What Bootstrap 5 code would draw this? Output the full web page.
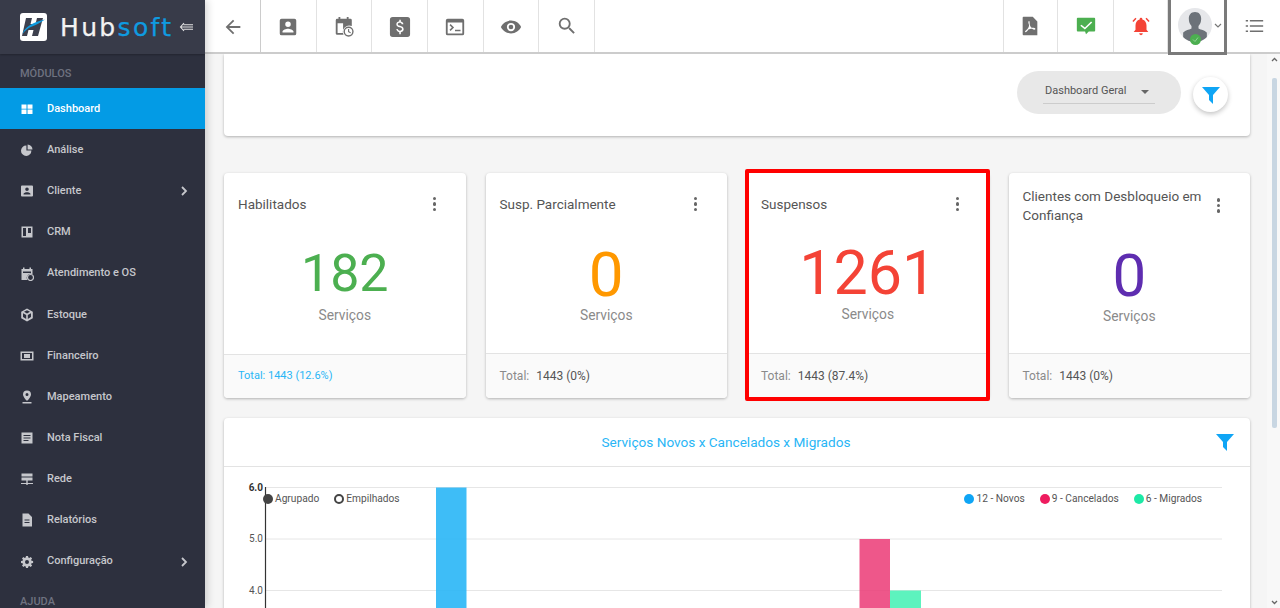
<!DOCTYPE html>
<html lang="pt-BR">
<head>
<meta charset="utf-8">
<title>Hubsoft</title>
<link href="https://cdn.jsdelivr.net/npm/bootstrap@5.3.0/dist/css/bootstrap.min.css" rel="stylesheet">
<style>
html,body{height:608px;overflow:hidden;margin:0}
body{font-family:Roboto,"Liberation Sans",sans-serif;background:#f5f5f5;color:#555}
.app-shell{height:608px;width:1280px}
.side-panel{width:205px;flex:none;background:#2d303e;z-index:3;box-shadow:2px 0 8px rgba(0,0,0,.18);overflow:hidden}
.brand-bar{height:54px;flex:none;background:#383b49;box-shadow:0 1px 2px rgba(0,0,0,.25);padding-left:20px}
.brand-word{font-family:"DejaVu Sans",sans-serif;font-size:25px;line-height:1;margin-left:13px;letter-spacing:2.35px;color:#f2f2f2;font-weight:400;-webkit-text-stroke:.25px currentColor}
.brand-word span{color:#0f9be0}
.collapse-ico{margin-left:6px;flex:none}
.side-head{flex:none;font-size:11px;font-weight:500;color:#6f7280;line-height:14px;height:34px;padding:13px 20px 0}
.side-link{flex:none;height:41.15px;padding:1px 14px 0 20px;color:#c6c7cc;font-size:11px;font-weight:500;text-decoration:none}
.side-link.on{background:#039be5;color:#fff}
.side-link svg.ico{width:14px;height:14px;margin-right:13px;fill:currentColor;flex:none}
.side-link .chev{margin-left:auto;width:8px;height:10px;margin-right:3px}
.top-strip{height:54px;flex:none;background:#fff;border-bottom:2px solid #ccc;z-index:2}
.tool-cell{width:55.7px;height:52px;border-right:1px solid #e2e2e2;flex:none}
.tool-cell.back{width:56px;border-right-color:#ccc}
.tool-cell.lower{padding-top:2px}
.tool-cell.lead-line{border-left:1px solid #e2e2e2;margin-left:-1px}
.tool-cell.bell-cell{width:54px}
.tool-cell svg{width:22px;height:22px;fill:#6f6f6f}
.user-cell{width:59px;height:55px;border:3px solid #7a7a7a;border-top:0;flex:none;margin-bottom:-1px;padding-left:7px;background:#fff;position:relative;z-index:1}
.user-ava{width:34px;height:34px;position:relative;flex:none;margin-top:-2px}
.user-ava svg.face{display:block;border-radius:50%;background:#e6e7ea}
.user-dot{position:absolute;left:12px;bottom:-3px;width:11px;height:11px}
.end-cell{width:53px;border:0}
.scroll-body{flex:1;min-height:0;min-width:0;overflow:hidden;padding:0 17px 0 19px}
.scroll-rail{width:13px;flex:none;background:#f8f8f8;position:relative}
.rail-thumb{position:absolute;top:24px;left:5px;width:5px;height:350px;background:#c8d6e2;border-radius:2px}
.rail-up,.rail-down{position:absolute;left:4px;width:7px;height:5px}
.rail-up{top:3px}.rail-down{top:546px}
.panel{background:#fff;border:0;border-radius:4px;box-shadow:0 1px 3px rgba(0,0,0,.28)}
.filter-panel{height:82px;border-radius:0 0 4px 4px;padding:17px 22px 0 0;margin-bottom:37px}
.select-pill{width:164px;height:43px;background:#e8e8e8;border-radius:22px;padding:0 26px;font-size:11px;color:#555}
.select-inner{border-bottom:1px solid #ccc;height:28px;width:112px;padding:4px 6px 0 2px;margin-top:5px}
.caret-mini{width:0;height:0;border-left:4px solid transparent;border-right:4px solid transparent;border-top:4px solid #666}
.round-filter{width:35px;height:35px;border-radius:50%;background:#fff;box-shadow:0 2px 5px rgba(0,0,0,.24);margin-left:12px;margin-top:6px}
.stat-row{display:grid;grid-template-columns:repeat(4,1fr);gap:20px;margin-bottom:20px}
.stat-card{height:225px;position:relative}
.stat-head{height:62px;padding:0 20px 0 14px;font-size:13.5px;line-height:19px;color:#555}
.stat-head.head-tall{padding-top:3px}
.dots{width:4px;flex:none;display:flex;flex-direction:column;gap:2px;margin-right:9px}
.dots i{display:block;width:3.4px;height:3.4px;border-radius:50%;background:#666}
.stat-num{line-height:60px;text-align:center;font-weight:400}
.stat-sub{font-size:13.8px;text-align:center;color:#8a8a8a;line-height:18px}
.stat-foot{position:absolute;left:0;right:0;bottom:0;height:45px;background:#fafafa;border-top:1px solid #e3e3e3;border-radius:0 0 4px 4px;font-size:12px;padding:0 14px;color:#555}
.stat-foot .muted-lbl{color:#8a8a8a;margin-right:7px}
.c-green{color:#4caf50;font-size:52px;margin:9px 0 2px}
.c-orange{color:#ff9800;font-size:62px;margin:10px 0 1px}
.c-red{color:#f44336;font-size:61px;margin:8px 0 2px}
.c-purple{color:#5e2db0;font-size:60px;margin:10.5px 0 1.5px}
.foot-sky{color:#29b6f6;font-size:11px;height:44px}
.mark-red::after{content:"";position:absolute;inset:-4px -1.5px -3px -2px;border:4.5px solid #f00;border-radius:2px;pointer-events:none}
.chart-panel{height:240px}
.chart-head{height:49px;border-bottom:1px solid #e3e3e3;position:relative;font-size:13.6px;color:#29b6f6;padding-right:22px}
.chart-filter{position:absolute;right:16px;top:15px;width:18px;height:18px}
.chart-box{position:relative;height:191px}
.chart-box svg{display:block}
.toggle-legend{position:absolute;left:39px;top:24px;font-size:10.2px;color:#555;gap:15px}
.series-legend{position:absolute;right:48px;top:24px;font-size:10.2px;color:#555;gap:15px}
.swatch{width:10px;height:10px;border-radius:50%;display:inline-block;margin-right:2px}
.swatch.hollow{border:2px solid #444;background:#fff}
</style>
</head>
<body>
<div class="app-shell d-flex">
  <aside class="side-panel d-flex flex-column">
    <div class="brand-bar d-flex align-items-center">
      <svg width="27" height="28" viewBox="0 0 27 28" style="flex:none"><rect width="27" height="28" rx="3" fill="#fff"/><path d="M6 5h6l-1.500 6h5L17 5h6l-5 18h-6l1.500-6h-5L7 23H2z" fill="#3d404e"/><path d="M2.500 21C4 14 14 9 25 6.500 20 10 16 12 12 13.500 8 15 5 17.500 2.500 21z" fill="#0f9be0"/></svg>
      <span class="brand-word">Hub<span>soft</span></span>
      <svg class="collapse-ico" width="14" height="10" viewBox="0 0 14 10" fill="none" stroke="#e4e4e4" stroke-width="1.100"><path d="M5 1 1.500 5 5 9M4.500 2.800H14M2 5h12M4.500 7.200H14"/></svg>
    </div>
    <div class="side-head">MÓDULOS</div>
    <a class="side-link on d-flex align-items-center" href="#"><svg class="ico" viewBox="0 0 14 14"><path d="M1.500 2.500h5v4.200h-5zM7.500 2.500h5v4.200h-5zM1.500 7.500h5v4.500h-5zM7.500 7.500h5v4.500h-5z"/></svg>Dashboard</a>
    <a class="side-link d-flex align-items-center" href="#"><svg class="ico" viewBox="0 0 14 14"><path d="M6.400 2.500v5h5A5.200 5.200 0 1 1 6.400 2.500zM7.600 1.500a5 5 0 0 1 4.900 4.900H7.600z"/></svg>Análise</a>
    <a class="side-link d-flex align-items-center" href="#"><svg class="ico" viewBox="0 0 14 14"><path fill-rule="evenodd" d="M2 1.500h10a1 1 0 0 1 1 1v9a1 1 0 0 1-1 1H2a1 1 0 0 1-1-1v-9a1 1 0 0 1 1-1zM7 3.500a1.800 1.800 0 1 0 0 3.600 1.800 1.800 0 0 0 0-3.600zM3.500 10.500h7V10c0-1.200-2.300-1.800-3.500-1.800S3.500 8.800 3.500 10z"/></svg>Cliente<svg class="chev" viewBox="0 0 8 10" fill="none" stroke="currentColor" stroke-width="1.800"><path d="m2 1 4 4-4 4"/></svg></a>
    <a class="side-link d-flex align-items-center" href="#"><svg class="ico" viewBox="0 0 14 14"><path fill-rule="evenodd" d="M1.500 1.500h11v11h-11zM3 3v8h3V3zM8 3v5h3V3z"/></svg>CRM</a>
    <a class="side-link d-flex align-items-center" href="#"><svg class="ico" viewBox="0 0 14 14"><path fill-rule="evenodd" d="M3 .5h1.500v1.500h5V.5H11V2h1.500v5.500a3.800 3.800 0 0 0-5 5.500H1.500V2H3zM3 4.500V6h8V4.500z"/><circle cx="10.500" cy="10.500" r="3" fill="none" stroke="currentColor" stroke-width="1.200"/></svg>Atendimento e OS</a>
    <a class="side-link d-flex align-items-center" href="#"><svg class="ico" viewBox="0 0 14 14"><path fill-rule="evenodd" d="m7 .5 5.800 3.200v6.600L7 13.500 1.200 10.300V3.700zM7 2.200 4 3.800l3 1.600 3-1.600zM3 5.200v3.900l3.200 1.800V7zM11 5.200 7.800 7v3.900L11 9.100z"/></svg>Estoque</a>
    <a class="side-link d-flex align-items-center" href="#"><svg class="ico" viewBox="0 0 14 14"><path fill-rule="evenodd" d="M.5 2.500h13v9H.5zM2 4v6h10V4z"/><path d="M4 5h6v4H4z"/></svg>Financeiro</a>
    <a class="side-link d-flex align-items-center" href="#"><svg class="ico" viewBox="0 0 14 14"><path fill-rule="evenodd" d="M7 .5a4 4 0 0 1 4 4c0 2.600-4 6.500-4 6.500S3 7.100 3 4.500a4 4 0 0 1 4-4zM7 3a1.500 1.500 0 1 0 0 3 1.500 1.500 0 0 0 0-3z"/><path d="M2.500 12h9v1.500h-9z"/></svg>Mapeamento</a>
    <a class="side-link d-flex align-items-center" href="#"><svg class="ico" viewBox="0 0 14 14"><path fill-rule="evenodd" d="M1.500 1.500h11v11h-11zM3.500 4v1h7V4zM3.500 6.500v1h7v-1zM3.500 9v1h5V9z"/></svg>Nota Fiscal</a>
    <a class="side-link d-flex align-items-center" href="#"><svg class="ico" viewBox="0 0 14 14"><path d="M1.500 1.500h11V4.500h-11zM1.500 5.500h11v3h-11zM6.300 8.500h1.400V11h5.300v1H7.700v1H6.300v-1H1v-1h5.300z"/></svg>Rede</a>
    <a class="side-link d-flex align-items-center" href="#"><svg class="ico" viewBox="0 0 14 14"><path fill-rule="evenodd" d="M2.500.5h6l3.500 3.500v9.500H2.500zM4.500 6.500v1h5v-1zM4.500 9v1h5V9z"/></svg>Relatórios</a>
    <a class="side-link d-flex align-items-center" href="#"><svg class="ico" viewBox="0 0 14 14"><path fill-rule="evenodd" d="M6 1h2l.3 1.600 1 .4L10.700 2l1.400 1.400-1 1.400.4 1 1.600.2v2l-1.600.3-.4 1 1 1.300-1.400 1.400-1.400-1-1 .4L8 13H6l-.3-1.600-1-.4-1.300 1-1.400-1.400 1-1.300-.4-1L1 8V6l1.600-.2.400-1-1-1.400L3.400 2l1.300 1 1-.4zM7 5a2 2 0 1 0 0 4 2 2 0 0 0 0-4z"/></svg>Configuração<svg class="chev" viewBox="0 0 8 10" fill="none" stroke="currentColor" stroke-width="1.800"><path d="m2 1 4 4-4 4"/></svg></a>
    <div class="side-head">AJUDA</div>
  </aside>

  <div class="flex-grow-1 d-flex flex-column" style="min-width:0">
    <header class="top-strip d-flex">
      <div class="tool-cell back lower d-flex align-items-center justify-content-center"><svg viewBox="0 0 24 24"><path d="M20 11H7.800l5.600-5.600L12 4l-8 8 8 8 1.400-1.400L7.800 13H20z"/></svg></div>
      <div class="tool-cell lower d-flex align-items-center justify-content-center"><svg viewBox="0 0 24 24"><path fill-rule="evenodd" d="M5 3h14a2 2 0 0 1 2 2v14a2 2 0 0 1-2 2H5a2 2 0 0 1-2-2V5a2 2 0 0 1 2-2zm7 3a3 3 0 1 0 0 6 3 3 0 0 0 0-6zM6 18h12v-1c0-2-4-3.100-6-3.100S6 15 6 17z"/></svg></div>
      <div class="tool-cell lower d-flex align-items-center justify-content-center"><svg viewBox="0 0 24 24"><path fill-rule="evenodd" d="M6 1h2v2h7V1h2v2h2a1.500 1.500 0 0 1 1.500 1.500V11a7 7 0 0 0-9 9.500H4.500A1.500 1.500 0 0 1 3 19V4.500A1.500 1.500 0 0 1 4.500 3H6zM5 8v10.500h6V8z"/><path fill-rule="evenodd" d="M17 11.500a5.500 5.500 0 1 1 0 11 5.500 5.500 0 0 1 0-11zm0 1.500a4 4 0 1 0 0 8 4 4 0 0 0 0-8zm-.6 1.200h1.200v2.500l2 1.200-.6 1-2.600-1.500z"/></svg></div>
      <div class="tool-cell lower d-flex align-items-center justify-content-center"><svg viewBox="0 0 24 24"><path fill-rule="evenodd" d="M4 1h16a3 3 0 0 1 3 3v16a3 3 0 0 1-3 3H4a3 3 0 0 1-3-3V4a3 3 0 0 1 3-3zm7.200 3v1.700C9.300 6.100 8 7.300 8 9c0 2 1.600 2.900 3.500 3.400 2 .5 2.700 1 2.700 1.900 0 .7-.6 1.700-2.300 1.700-1.600 0-2.300-.8-2.400-1.700H8c.1 1.800 1.500 2.900 3.200 3.300V20h1.700v-2.400c1.900-.3 3.100-1.400 3.100-3.200 0-2.400-2.100-3.200-3.900-3.700-1.900-.5-2.500-1-2.500-1.800s.8-1.500 2.200-1.500c1.400 0 2 .7 2 1.600h1.900c-.1-1.400-1-2.600-2.800-3V4z"/></svg></div>
      <div class="tool-cell lower d-flex align-items-center justify-content-center"><svg viewBox="0 0 24 24"><path fill-rule="evenodd" d="M4 3h16a2 2 0 0 1 2 2v14a2 2 0 0 1-2 2H4a2 2 0 0 1-2-2V5a2 2 0 0 1 2-2zm0 4v12h16V7zm2 3 1.200-1.200L11 12.500 7.200 16.300 6 15.100l2.600-2.600zm6 5h6v1.500h-6z"/></svg></div>
      <div class="tool-cell lower d-flex align-items-center justify-content-center"><svg viewBox="0 0 24 24"><path fill-rule="evenodd" d="M12 5c5 0 9.300 3.100 11 7-1.700 3.900-6 7-11 7S2.700 15.900 1 12c1.700-3.900 6-7 11-7zm0 2.500a4.500 4.500 0 1 0 0 9 4.500 4.500 0 0 0 0-9zm0 2a2.500 2.500 0 1 1 0 5 2.500 2.500 0 0 1 0-5z"/></svg></div>
      <div class="tool-cell d-flex align-items-center justify-content-center"><svg viewBox="0 0 24 24"><path d="M15.500 14h-.79l-.28-.27A6.471 6.471 0 0 0 16 9.500 6.500 6.500 0 1 0 9.500 16c1.610 0 3.090-.59 4.230-1.570l.27.28v.79l5 4.990L20.490 19l-4.990-5zm-6 0C7.010 14 5 11.990 5 9.500S7.010 5 9.500 5 14 7.010 14 9.500 11.990 14 9.500 14z"/></svg></div>
      <div class="flex-grow-1"></div>
      <div class="tool-cell lead-line d-flex align-items-center justify-content-center"><svg viewBox="0 0 24 24"><path fill-rule="evenodd" d="M5 2h10l5 5v15H5a1 1 0 0 1-1-1V3a1 1 0 0 1 1-1zm6 4.500c-.9 0-1.100 1.300-.2 3.800.4 1.100.1 2.300-.8 3.900-1 1.800-3.700 3-3.400 4.200.3 1 2.100 0 3.600-2.600 1-.4 2.600-.8 4-.9 1.500 1.100 3.400 1.500 3.700.5.300-1.200-1.800-1.500-4.200-1.400-1.100-1.200-1.800-2.400-2-3.700-.1-2.300-.1-3.800-.7-3.800z"/></svg></div>
      <div class="tool-cell d-flex align-items-center justify-content-center"><svg viewBox="0 0 24 24"><path fill="#4caf50" fill-rule="evenodd" d="M3 3h18a1 1 0 0 1 1 1v13a1 1 0 0 1-1 1h-6l-3 3-1-3H3a1 1 0 0 1-1-1V4a1 1 0 0 1 1-1zm14.500 4L10.800 13.500 7 10.500l-1.200 1.300 5 4 8-7.600z"/></svg></div>
      <div class="tool-cell bell-cell d-flex align-items-center justify-content-center"><svg viewBox="0 0 24 24"><path fill="#f44336" d="M12 3a1.500 1.500 0 0 1 1.500 1.500v.4C16.500 5.700 18 8.300 18 11.500V16l2 2.500H4L6 16v-4.500c0-3.200 1.500-5.800 4.500-6.600v-.4A1.500 1.500 0 0 1 12 3zM10 20h4a2 2 0 0 1-4 0z"/><path fill="none" stroke="#f44336" stroke-width="1.600" d="M6.500 3.500 3.200 7M17.500 3.500 20.800 7"/></svg></div>
      <div class="user-cell d-flex align-items-center">
        <div class="user-ava"><svg class="face" width="34" height="34" viewBox="0 0 33 33"><path d="M16.500 4c4 0 6 2.800 6 6.500 0 3-1 5.500-2.600 7v2.300c2.400 1.300 7 2 8.100 4.200V33H5v-9c1.100-2.200 5.700-2.900 8.100-4.200v-2.300c-1.600-1.500-2.600-4-2.600-7C10.500 6.800 12.500 4 16.500 4z" fill="#6c7279"/></svg>
          <svg class="user-dot" viewBox="0 0 11 11"><circle cx="5.500" cy="5.500" r="5.500" fill="#4caf50"/><path d="m3 5.500 2 2 3-4" fill="none" stroke="#8fd392" stroke-width="1"/></svg></div>
        <svg style="margin-left:2px" width="8" height="6" viewBox="0 0 8 6" fill="none" stroke="#777" stroke-width="1.200"><path d="m1 1 3 3 3-3"/></svg>
      </div>
      <div class="tool-cell end-cell d-flex align-items-center justify-content-center"><svg viewBox="0 0 24 24"><path d="M3 5.500h2.500v1.600H3zM7.500 5.500H22v1.600H7.500zM3 11.200h2.500v1.600H3zM7.500 11.200H22v1.600H7.500zM3 16.900h2.500v1.600H3zM7.500 16.900H22v1.600H7.500z"/></svg></div>
    </header>

    <div class="d-flex flex-grow-1" style="min-height:0">
      <main class="scroll-body">
        <section class="panel filter-panel d-flex justify-content-end align-items-start">
          <div class="select-pill d-flex align-items-start"><div class="select-inner d-flex justify-content-between align-items-center"><span>Dashboard Geral</span><span class="caret-mini"></span></div></div>
          <div class="round-filter d-flex align-items-center justify-content-center"><svg width="18" height="18" viewBox="0 0 18 18"><path d="M0 1h18l-7 8v9l-4-4V9z" fill="#0fa5f5"/></svg></div>
        </section>
        <section class="stat-row">
          <article class="panel stat-card">
            <div class="stat-head d-flex align-items-center justify-content-between"><span>Habilitados</span><span class="dots"><i></i><i></i><i></i></span></div>
            <div class="stat-num c-green">182</div><div class="stat-sub">Serviços</div>
            <div class="stat-foot foot-sky d-flex align-items-center">Total: 1443 (12.6%)</div>
          </article>
          <article class="panel stat-card">
            <div class="stat-head d-flex align-items-center justify-content-between"><span>Susp. Parcialmente</span><span class="dots"><i></i><i></i><i></i></span></div>
            <div class="stat-num c-orange">0</div><div class="stat-sub">Serviços</div>
            <div class="stat-foot d-flex align-items-center"><span class="muted-lbl">Total:</span>1443 (0%)</div>
          </article>
          <article class="panel stat-card mark-red">
            <div class="stat-head d-flex align-items-center justify-content-between"><span>Suspensos</span><span class="dots"><i></i><i></i><i></i></span></div>
            <div class="stat-num c-red">1261</div><div class="stat-sub">Serviços</div>
            <div class="stat-foot d-flex align-items-center"><span class="muted-lbl">Total:</span>1443 (87.4%)</div>
          </article>
          <article class="panel stat-card">
            <div class="stat-head head-tall d-flex align-items-center justify-content-between"><span>Clientes com Desbloqueio em Confiança</span><span class="dots"><i></i><i></i><i></i></span></div>
            <div class="stat-num c-purple">0</div><div class="stat-sub">Serviços</div>
            <div class="stat-foot d-flex align-items-center"><span class="muted-lbl">Total:</span>1443 (0%)</div>
          </article>
        </section>
        <section class="panel chart-panel">
          <div class="chart-head d-flex align-items-center justify-content-center">Serviços Novos x Cancelados x Migrados
            <svg class="chart-filter" viewBox="0 0 18 18"><path d="M0 1h18l-7 8v9l-4-4V9z" fill="#0fa5f5"/></svg></div>
          <div class="chart-box">
            <svg width="1026" height="191" viewBox="0 0 1026 191">
              <g stroke="#e6e6e6" stroke-width="1"><path d="M41 20.500h957M41 72h957M41 123.500h957"/></g>
              <path d="M41.500 20v171" stroke="#333" stroke-width="1.200"/>
              <rect x="212" y="20.500" width="30.500" height="171" fill="#29b6f6" opacity=".9"/>
              <rect x="635.500" y="72" width="30.500" height="120" fill="#ec407a" opacity=".88"/>
              <rect x="666" y="123.500" width="31" height="68" fill="#4ff2b9" opacity=".92"/>
              <g font-family="Roboto,'Liberation Sans',sans-serif" font-size="10" fill="#555" text-anchor="end">
                <text x="39" y="23.500" font-weight="700" fill="#333">6.0</text>
                <text x="39" y="75">5.0</text>
                <text x="39" y="126.500">4.0</text>
              </g>
            </svg>
            <div class="toggle-legend d-flex">
              <span class="d-flex align-items-center"><i class="swatch" style="background:#444"></i>Agrupado</span>
              <span class="d-flex align-items-center"><i class="swatch hollow"></i>Empilhados</span>
            </div>
            <div class="series-legend d-flex">
              <span class="d-flex align-items-center"><i class="swatch" style="background:#0fa5f5"></i>12 - Novos</span>
              <span class="d-flex align-items-center"><i class="swatch" style="background:#ee1c5f"></i>9 - Cancelados</span>
              <span class="d-flex align-items-center"><i class="swatch" style="background:#1de9a6"></i>6 - Migrados</span>
            </div>
          </div>
        </section>
      </main>
      <div class="scroll-rail">
        <svg class="rail-up" viewBox="0 0 7 5" fill="none" stroke="#666" stroke-width="1.300"><path d="m1 4 2.500-2.500L6 4"/></svg>
        <div class="rail-thumb"></div>
        <svg class="rail-down" viewBox="0 0 7 5" fill="none" stroke="#666" stroke-width="1.300"><path d="m1 1 2.500 2.500L6 1"/></svg>
      </div>
    </div>
  </div>
</div>
<script src="https://cdn.jsdelivr.net/npm/bootstrap@5.3.0/dist/js/bootstrap.bundle.min.js"></script>
</body>
</html>
